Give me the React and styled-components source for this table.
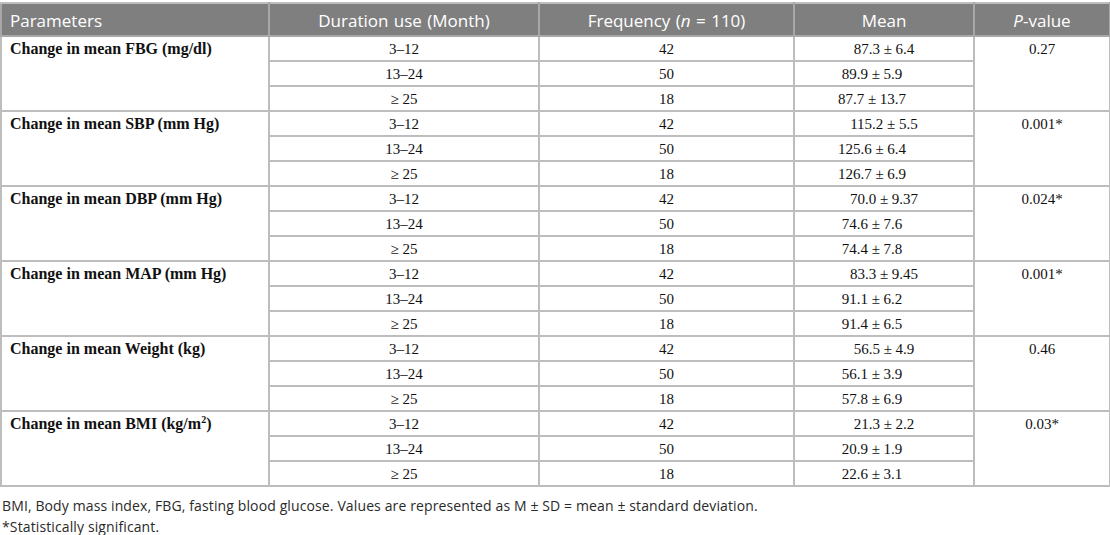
import React from 'react';
import styled, { createGlobalStyle } from 'styled-components';

const GlobalStyle = createGlobalStyle`
  body {
    margin: 0;
    background: #ffffff;
  }
`

const groups = [
  { label: 'Change in mean FBG (mg/dl)', p: '0.27', means: ['87.3 ± 6.4', '89.9 ± 5.9', '87.7 ± 13.7'] },
  { label: 'Change in mean SBP (mm Hg)', p: '0.001*', means: ['115.2 ± 5.5', '125.6 ± 6.4', '126.7 ± 6.9'] },
  { label: 'Change in mean DBP (mm Hg)', p: '0.024*', means: ['70.0 ± 9.37', '74.6 ± 7.6', '74.4 ± 7.8'] },
  { label: 'Change in mean MAP (mm Hg)', p: '0.001*', means: ['83.3 ± 9.45', '91.1 ± 6.2', '91.4 ± 6.5'] },
  { label: 'Change in mean Weight (kg)', p: '0.46', means: ['56.5 ± 4.9', '56.1 ± 3.9', '57.8 ± 6.9'] },
  { label: <>Change in mean BMI (kg/m<sup>2</sup>)</>, p: '0.03*', means: ['21.3 ± 2.2', '20.9 ± 1.9', '22.6 ± 3.1'] },
]

const durations = ['3–12', '13–24', '≥ 25']
const freqs = ['42', '50', '18']

function App() {
  return (
    <Page>
      <GlobalStyle />
      <Table>
        <colgroup>
          <col style={{ width: 268 }} />
          <col style={{ width: 270 }} />
          <col style={{ width: 255 }} />
          <col style={{ width: 180 }} />
          <col style={{ width: 136 }} />
        </colgroup>
        <thead>
          <tr>
            <HeadCell $align="left">Parameters</HeadCell>
            <HeadCell>Duration use (Month)</HeadCell>
            <HeadCell>Frequency (<i>n</i> = 110)</HeadCell>
            <HeadCell>Mean</HeadCell>
            <HeadCell><i>P</i>-value</HeadCell>
          </tr>
        </thead>
        <tbody>
          {groups.map((g, gi) =>
            durations.map((d, i) => (
              <Row key={gi + '-' + i}>
                {i === 0 && <ParamCell rowSpan={3}>{g.label}</ParamCell>}
                <Cell>{d}</Cell>
                <Cell>{freqs[i]}</Cell>
                <Cell $shift={i > 0}>{g.means[i]}</Cell>
                {i === 0 && <PCell rowSpan={3}>{g.p}</PCell>}
              </Row>
            ))
          )}
        </tbody>
      </Table>
      <Notes>
        <Note>BMI, Body mass index, FBG, fasting blood glucose. Values are represented as M ± SD = mean ± standard deviation.</Note>
        <Note>*Statistically significant.</Note>
      </Notes>
    </Page>
  )
}

export default App

const Page = styled.div`
  width: 1110px;
  padding-top: 2px;
  box-sizing: border-box;
`

const Table = styled.table`
  width: 1109px;
  table-layout: fixed;
  border-collapse: collapse;
  border: 2px solid #bdbdbd;
  font-family: 'Liberation Serif', serif;
  font-size: 15px;
  color: #111111;
`

const HeadCell = styled.th`
  height: 33px;
  background: #7f7f7f;
  color: #ffffff;
  font-family: 'Open Sans', sans-serif;
  font-weight: 400;
  font-size: 17px;
  word-spacing: 1px;
  text-align: ${p => p.$align || 'center'};
  vertical-align: bottom;
  padding: 0 8px 3px;
  border: 2px solid #a8a8a8;
  border-top-color: #bdbdbd;
  box-sizing: border-box;
  i {
    font-style: italic;
  }
`

const Row = styled.tr`
  height: 25px;
`

const Cell = styled.td`
  text-align: center;
  vertical-align: middle;
  padding: 0 ${p => (p.$shift ? '24px' : '0')} 0 0;
  border: 2px solid #bdbdbd;
  line-height: 18px;
`

const ParamCell = styled.td`
  vertical-align: top;
  text-align: left;
  font-size: 16px;
  font-weight: 700;
  padding: 3px 8px 0;
  border: 2px solid #bdbdbd;
  line-height: 18px;
  sup {
    font-size: 10px;
    line-height: 0;
  }
`

const PCell = styled.td`
  vertical-align: top;
  text-align: center;
  padding: 3px 0 0;
  border: 2px solid #bdbdbd;
  line-height: 18px;
`

const Notes = styled.div`
  padding: 8px 2px 0;
`

const Note = styled.div`
  font-family: 'Open Sans', sans-serif;
  font-size: 14px;
  letter-spacing: 0.12px;
  line-height: 21px;
  color: #2a2a2a;
`
